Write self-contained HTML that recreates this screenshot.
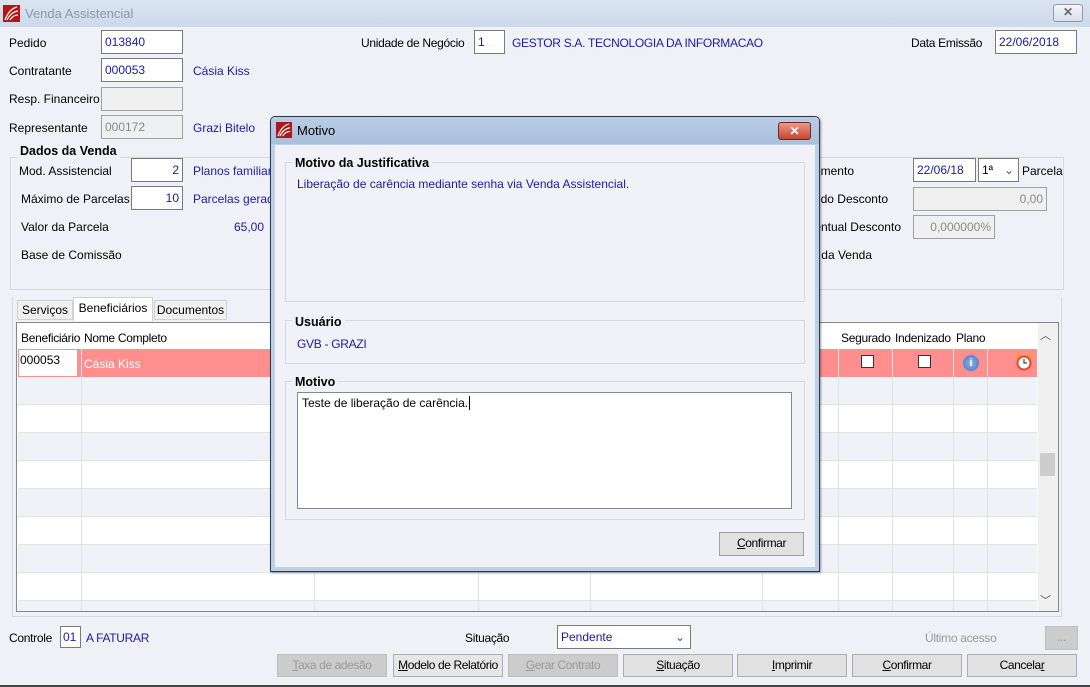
<!DOCTYPE html>
<html><head><meta charset="utf-8"><style>
*{box-sizing:border-box;margin:0;padding:0}
body{width:1090px;height:687px;position:relative;overflow:hidden;background:#f0f1f7;font-family:"Liberation Sans",sans-serif;font-size:12px;color:#000}
.a{position:absolute;white-space:nowrap}
.t{position:absolute;white-space:nowrap;line-height:14px}
.r{position:absolute;white-space:nowrap;line-height:14px;text-align:right}
.b{color:#1a1aa8}
.in{position:absolute;background:#fff;border:1px solid #7a7a7a;height:24px;line-height:22px;padding:0 3px;color:#1a1aa8}
.dis{background:#f0f0f0;color:#888;border-color:#a0a0a0}
.gb{position:absolute;border:1px solid #d8d8dc}
.gt{position:absolute;background:#f0f1f7;font-weight:bold;font-size:12.5px;padding:0 3px;line-height:14px}
.btn{position:absolute;height:23px;border:1px solid #adadad;background:#e1e1e1;text-align:center;line-height:21px;font-size:12px;letter-spacing:-0.4px}
.btn.d{color:#999;background:#ccc;border-color:#bfbfbf}
.row{position:absolute;left:18px;width:1019px;height:28px;border-bottom:1px solid #e2e2e2}
.vl{position:absolute;top:349px;height:262px;width:1px;background:#e2e2e2}
.cb{position:absolute;width:13px;height:13px;border:1px solid #333;background:#fff}
</style></head><body>
<div class="a" style="left:0;top:0;width:1090px;height:27px;background:linear-gradient(#dbe5f1,#ccd9e9)"></div>
<svg class="a" style="left:3px;top:5px" width="17" height="17" viewBox="0 0 17 17"><rect width="17" height="17" fill="#b01818"/><path d="M2 15 Q6 4 14 2 M4 15 Q8 7 15 6 M7 15 Q10 10 15 10" stroke="#fff" stroke-width="1.2" fill="none"/></svg>
<div class="t" style="left:25px;top:7px;font-size:13px;color:#8a97a8">Venda Assistencial</div>
<div class="a" style="left:1053px;top:4px;width:30px;height:18px;border:1px solid #8b99aa;border-radius:3px;background:linear-gradient(#f3f6fa,#d8e0ea);text-align:center;line-height:15px;color:#666;font-weight:bold">✕</div>

<div class="t" style="left:9px;top:36px">Pedido</div>
<div class="in" style="left:101px;top:30px;width:82px">013840</div>
<div class="t" style="left:9px;top:64px">Contratante</div>
<div class="in" style="left:101px;top:58px;width:82px">000053</div>
<div class="t b" style="left:193px;top:64px">Cásia Kiss</div>
<div class="t" style="left:9px;top:92px">Resp. Financeiro</div>
<div class="in dis" style="left:101px;top:87px;width:82px"></div>
<div class="t" style="left:9px;top:121px">Representante</div>
<div class="in dis" style="left:101px;top:115px;width:82px">000172</div>
<div class="t b" style="left:193px;top:121px">Grazi Bitelo</div>

<div class="t" style="left:361px;top:36px;letter-spacing:-0.3px">Unidade de Negócio</div>
<div class="in" style="left:474px;top:30px;width:31px;color:#1a1aa8">1</div>
<div class="t b" style="left:512px;top:36px;letter-spacing:-0.3px">GESTOR S.A. TECNOLOGIA DA INFORMACAO</div>
<div class="t" style="left:911px;top:36px;letter-spacing:-0.3px">Data Emissão</div>
<div class="in" style="left:995px;top:30px;width:82px">22/06/2018</div>

<div class="gb" style="left:10px;top:157px;width:1054px;height:133px"></div>
<div class="gt" style="left:17px;top:144px">Dados da Venda</div>
<div class="t" style="left:19px;top:164px">Mod. Assistencial</div>
<div class="in" style="left:131px;top:158px;width:52px;text-align:right">2</div>
<div class="t b" style="left:193px;top:164px">Planos familiares</div>
<div class="t" style="left:21px;top:192px">Máximo de Parcelas</div>
<div class="in" style="left:131px;top:186px;width:52px;text-align:right">10</div>
<div class="t b" style="left:193px;top:192px">Parcelas geradas</div>
<div class="t" style="left:21px;top:220px">Valor da Parcela</div>
<div class="t b" style="left:234px;top:220px">65,00</div>
<div class="t" style="left:21px;top:248px">Base de Comissão</div>

<div class="r" style="right:236px;top:164px">Vencimento</div>
<div class="in" style="left:913px;top:158px;width:63px">22/06/18</div>
<div class="in" style="left:978px;top:158px;width:41px;color:#000">1ª <span style="position:absolute;right:4px;color:#555">⌄</span></div>
<div class="t" style="left:1022px;top:164px">Parcela</div>
<div class="r" style="right:202px;top:192px">Valor do Desconto</div>
<div class="in dis" style="left:913px;top:187px;width:134px;text-align:right">0,00</div>
<div class="r" style="right:189px;top:220px">Percentual Desconto</div>
<div class="in dis" style="left:913px;top:215px;width:82px;text-align:right">0,000000%</div>
<div class="r" style="right:218px;top:248px">Valor da Venda</div>

<div class="a" style="left:12px;top:297px;width:1050px;height:320px;border:1px solid #d8d8dc;border-top:none"></div>
<div class="a" style="left:17px;top:300px;width:56px;height:20px;border:1px solid #d0d0d0;background:#f0f0f0;text-align:center;line-height:19px">Serviços</div>
<div class="a" style="left:73px;top:297px;width:80px;height:24px;border:1px solid #d0d0d0;border-bottom:none;background:#fff;text-align:center;line-height:20px">Beneficiários</div>
<div class="a" style="left:154px;top:300px;width:73px;height:20px;border:1px solid #d0d0d0;background:#f0f0f0;text-align:center;line-height:19px">Documentos</div>

<div class="a" style="left:16px;top:322px;width:1043px;height:290px;border:1px solid #828790;background:#fff"></div>
<div class="t" style="left:21px;top:331px;letter-spacing:-0.3px">Beneficiário</div>
<div class="t" style="left:84px;top:331px;letter-spacing:-0.3px">Nome Completo</div>
<div class="t" style="left:841px;top:331px;letter-spacing:-0.3px">Segurado</div>
<div class="t" style="left:895px;top:331px;letter-spacing:-0.3px">Indenizado</div>
<div class="t" style="left:956px;top:331px;letter-spacing:-0.3px">Plano</div>
<div class="a" style="left:18px;top:349px;width:1019px;height:28px;background:#ff8e8e"></div>
<div class="a" style="left:19px;top:350px;width:58px;height:26px;background:#fff"></div>
<div class="t" style="left:20px;top:353px">000053</div>
<div class="t" style="left:84px;top:357px;color:#fff">Cásia Kiss</div>
<div class="cb" style="left:861px;top:355px"></div>
<div class="cb" style="left:918px;top:355px"></div>
<div class="a" style="left:963px;top:355px;width:16px;height:16px;border-radius:50%;background:radial-gradient(#8fb8ea,#3b6fc0);color:#fff;font-size:11px;text-align:center;line-height:16px;font-weight:bold">i</div>
<svg class="a" style="left:1015px;top:353px" width="18" height="18" viewBox="0 0 18 18"><circle cx="3.5" cy="3.5" r="2.5" fill="#f0a020"/><circle cx="14.5" cy="3.5" r="2.5" fill="#f0a020"/><circle cx="9" cy="10" r="6.5" fill="#fff" stroke="#e04a2a" stroke-width="2"/><path d="M9 6v4h3" stroke="#444" stroke-width="1.2" fill="none"/></svg>
<div class="row" style="top:377px;background:#f1f2f7"></div>
<div class="row" style="top:405px;background:#fff"></div>
<div class="row" style="top:433px;background:#f1f2f7"></div>
<div class="row" style="top:461px;background:#fff"></div>
<div class="row" style="top:489px;background:#f1f2f7"></div>
<div class="row" style="top:517px;background:#fff"></div>
<div class="row" style="top:545px;background:#f1f2f7"></div>
<div class="row" style="top:573px;background:#fff"></div>
<div class="row" style="top:601px;height:10px;background:#f1f2f7;border:none"></div>
<div class="vl" style="left:81px"></div><div class="vl" style="left:314px"></div><div class="vl" style="left:478px"></div>
<div class="vl" style="left:590px"></div><div class="vl" style="left:762px"></div><div class="vl" style="left:838px"></div>
<div class="vl" style="left:892px"></div><div class="vl" style="left:953px"></div><div class="vl" style="left:987px"></div>
<div class="a" style="left:1038px;top:323px;width:20px;height:288px;background:#f0f0f0"></div>
<div class="a" style="left:1040px;top:327px;color:#555;font-size:11px">︿</div>
<div class="a" style="left:1040px;top:453px;width:15px;height:23px;background:#cdcdcd"></div>
<div class="a" style="left:1040px;top:592px;color:#555;font-size:11px">﹀</div>

<div class="t" style="left:9px;top:631px;letter-spacing:-0.3px">Controle</div>
<div class="in" style="left:60px;top:626px;width:21px;height:22px;line-height:20px;padding:0 2px">01</div>
<div class="t b" style="left:86px;top:631px;letter-spacing:-0.3px">A FATURAR</div>
<div class="t" style="left:465px;top:631px;letter-spacing:-0.3px">Situação</div>
<div class="in" style="left:557px;top:625px;width:134px;height:24px">Pendente<span style="position:absolute;right:5px;color:#555">⌄</span></div>
<div class="t" style="left:925px;top:631px;color:#999;letter-spacing:-0.3px">Último acesso</div>
<div class="btn d" style="left:1045px;top:626px;width:33px;height:24px">...</div>
<div class="btn d" style="left:277px;top:654px;width:110px"><u>T</u>axa de adesão</div>
<div class="btn" style="left:393px;top:654px;width:110px;background:#e6e6e6"><u>M</u>odelo de Relatório</div>
<div class="btn d" style="left:508px;top:654px;width:110px"><u>G</u>erar Contrato</div>
<div class="btn" style="left:623px;top:654px;width:110px"><u>S</u>ituação</div>
<div class="btn" style="left:737px;top:654px;width:110px"><u>I</u>mprimir</div>
<div class="btn" style="left:852px;top:654px;width:110px"><u>C</u>onfirmar</div>
<div class="btn" style="left:967px;top:654px;width:110px">Cancela<u>r</u></div>
<div class="a" style="left:0;top:685px;width:1090px;height:2px;background:#444"></div>

<div class="a" style="left:270px;top:116px;width:550px;height:456px;border:1px solid #2b3a4a;border-radius:5px 5px 0 0;background:#bcd0e6;box-shadow:1px 1px 2px rgba(0,0,0,.4)"></div>
<div class="a" style="left:271px;top:117px;width:548px;height:27px;border-radius:4px 4px 0 0;background:linear-gradient(#b9cde4,#a9c0dc)"></div>
<svg class="a" style="left:276px;top:122px" width="16" height="16" viewBox="0 0 17 17"><rect width="17" height="17" fill="#b01818"/><path d="M2 15 Q6 4 14 2 M4 15 Q8 7 15 6 M7 15 Q10 10 15 10" stroke="#fff" stroke-width="1.2" fill="none"/></svg>
<div class="t" style="left:297px;top:124px;font-size:13px">Motivo</div>
<div class="a" style="left:778px;top:122px;width:33px;height:18px;border:1px solid #6b2a22;border-radius:3px;background:linear-gradient(#e99a88,#c7452f);color:#fff;text-align:center;line-height:16px;font-weight:bold;font-size:12px">✕</div>
<div class="a" style="left:275px;top:145px;width:540px;height:422px;background:#f1f2f7"></div>
<div class="gb" style="left:285px;top:162px;width:520px;height:140px"></div>
<div class="gt" style="left:292px;top:156px">Motivo da Justificativa</div>
<div class="t b" style="left:297px;top:177px">Liberação de carência mediante senha via Venda Assistencial.</div>
<div class="gb" style="left:285px;top:320px;width:520px;height:44px"></div>
<div class="gt" style="left:292px;top:315px">Usuário</div>
<div class="t b" style="left:297px;top:337px;letter-spacing:-0.3px">GVB - GRAZI</div>
<div class="gb" style="left:285px;top:381px;width:520px;height:139px"></div>
<div class="gt" style="left:292px;top:375px">Motivo</div>
<div class="a" style="left:297px;top:392px;width:495px;height:117px;background:#fff;border:1px solid #828790"></div>
<div class="t" style="left:302px;top:396px">Teste de liberação de carência.<span style="border-left:1px solid #000;margin-left:1px"></span></div>
<div class="btn" style="left:719px;top:532px;width:85px;height:24px;border-color:#a0a0a0"><u>C</u>onfirmar</div>
</body></html>
